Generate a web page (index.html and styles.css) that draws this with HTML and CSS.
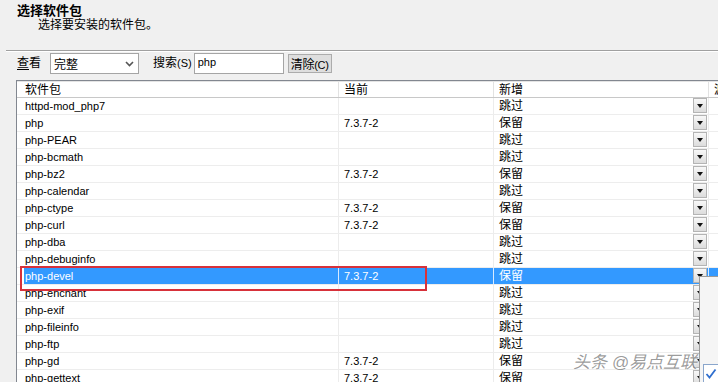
FILE: index.html
```html
<!DOCTYPE html>
<html>
<head>
  <meta charset="utf-8">
  <link rel="stylesheet" href="styles.css">
</head>
<body>
  <div class="head">
    <div class="title">选择软件包</div>
    <div class="sub">选择要安装的软件包。</div>
  </div>
  <div class="rule"></div>
  <div class="toolbar">
    <span class="lbl"><u>查</u>看</span>
    <div class="select">
      <span>完整</span>
      <svg width="9" height="6" viewBox="0 0 9 6"><path d="M1 1 L4.5 4.5 L8 1" fill="none" stroke="#555" stroke-width="1.6"/></svg>
    </div>
    <span class="lbl search">搜索<span class="lat">(S)</span></span>
    <div class="input">php</div>
    <button class="btn">清除<span class="lat">(C)</span></button>
  </div>

  <div class="list">
    <div class="row hdr">
      <div class="c">软件包</div>
      <div class="c">当前</div>
      <div class="c">新增</div>
      <div class="c">源码</div>
    </div>
    <div class="row"><div class="c">httpd-mod_php7</div><div class="c"></div><div class="c act"><span>跳过</span><i class="dd"></i></div><div class="c"></div></div>
    <div class="row"><div class="c">php</div><div class="c">7.3.7-2</div><div class="c act"><span>保留</span><i class="dd"></i></div><div class="c"></div></div>
    <div class="row"><div class="c">php-PEAR</div><div class="c"></div><div class="c act"><span>跳过</span><i class="dd"></i></div><div class="c"></div></div>
    <div class="row"><div class="c">php-bcmath</div><div class="c"></div><div class="c act"><span>跳过</span><i class="dd"></i></div><div class="c"></div></div>
    <div class="row"><div class="c">php-bz2</div><div class="c">7.3.7-2</div><div class="c act"><span>保留</span><i class="dd"></i></div><div class="c"></div></div>
    <div class="row"><div class="c">php-calendar</div><div class="c"></div><div class="c act"><span>跳过</span><i class="dd"></i></div><div class="c"></div></div>
    <div class="row"><div class="c">php-ctype</div><div class="c">7.3.7-2</div><div class="c act"><span>保留</span><i class="dd"></i></div><div class="c"></div></div>
    <div class="row"><div class="c">php-curl</div><div class="c">7.3.7-2</div><div class="c act"><span>保留</span><i class="dd"></i></div><div class="c"></div></div>
    <div class="row"><div class="c">php-dba</div><div class="c"></div><div class="c act"><span>跳过</span><i class="dd"></i></div><div class="c"></div></div>
    <div class="row"><div class="c">php-debuginfo</div><div class="c"></div><div class="c act"><span>跳过</span><i class="dd"></i></div><div class="c"></div></div>
    <div class="row sel"><div class="c">php-devel</div><div class="c">7.3.7-2</div><div class="c act"><span>保留</span><i class="dd"></i></div><div class="c"></div></div>
    <div class="row"><div class="c">php-enchant</div><div class="c"></div><div class="c act"><span>跳过</span><i class="dd"></i></div><div class="c"></div></div>
    <div class="row"><div class="c">php-exif</div><div class="c"></div><div class="c act"><span>跳过</span><i class="dd"></i></div><div class="c"></div></div>
    <div class="row"><div class="c">php-fileinfo</div><div class="c"></div><div class="c act"><span>跳过</span><i class="dd"></i></div><div class="c"></div></div>
    <div class="row"><div class="c">php-ftp</div><div class="c"></div><div class="c act"><span>跳过</span><i class="dd"></i></div><div class="c"></div></div>
    <div class="row"><div class="c">php-gd</div><div class="c">7.3.7-2</div><div class="c act"><span>保留</span><i class="dd"></i></div><div class="c"></div></div>
    <div class="row"><div class="c">php-gettext</div><div class="c">7.3.7-2</div><div class="c act"><span>保留</span><i class="dd"></i></div><div class="c"></div></div>

    <div class="mark"></div>
    <div class="popup">
      <div class="check">
        <svg width="12" height="12" viewBox="0 0 12 12"><path d="M1.5 6 L4.5 9.5 L10.5 1.5" fill="none" stroke="#2f6fcf" stroke-width="1.8"/></svg>
      </div>
    </div>
  </div>

  <div class="wm">头条 @易点互联</div>
</body>
</html>
```

FILE: styles.css
```css
body {
  margin: 0;
  width: 718px;
  height: 382px;
  overflow: hidden;
  position: relative;
  background: #f0f0f0;
  color: #000;
  font-family: "Liberation Sans", "Noto Sans CJK SC", sans-serif;
  font-size: 12px;
}
.head {
  height: 50px;
  box-sizing: border-box;
  padding-top: 3px;
}
.title {
  padding-left: 17px;
  font-weight: bold;
  font-size: 13px;
  line-height: 15px;
}
.sub {
  padding-left: 38px;
  line-height: 14px;
}
.rule {
  margin-left: 6px;
  height: 1px;
  background: #a0a0a0;
  border-bottom: 1px solid #fff;
}
.toolbar {
  display: flex;
  align-items: center;
  height: 21px;
  margin-top: 1px;
  padding-left: 17px;
}
.lbl {
  line-height: 21px;
}
.lbl u {
  text-underline-offset: 2px;
}
.lat {
  font-size: 11px;
}
.select {
  margin-left: 9px;
  width: 89px;
  height: 21px;
  box-sizing: border-box;
  border: 1px solid #a5a5a5;
  background: #fff;
  display: flex;
  align-items: center;
  justify-content: space-between;
  padding: 0 4px 0 3px;
}
.search {
  margin-left: 14px;
}
.input {
  margin-left: 2px;
  width: 90px;
  height: 21px;
  box-sizing: border-box;
  border: 1px solid #a5a5a5;
  background: #fff;
  padding: 1px 3px;
  font-size: 11px;
  line-height: 15px;
}
.btn {
  margin-left: 4px;
  width: 44px;
  height: 19px;
  padding: 0;
  border: 1px solid #acacac;
  background: #dedede;
  font-family: inherit;
  font-size: 12px;
  letter-spacing: -0.3px;
  color: #000;
  white-space: nowrap;
}
.list {
  position: relative;
  margin: 6px 0 0 16px;
  width: 740px;
  border-top: 1px solid #828790;
  border-left: 1px solid #828790;
  background: #fff;
}
.row {
  display: grid;
  grid-template-columns: 321px 155px 215px 1fr;
  height: 17px;
  box-sizing: border-box;
  border-bottom: 1px solid #ededed;
  font-size: 11px;
  line-height: 16px;
}
.row .c {
  padding-left: 5px;
  white-space: nowrap;
  overflow: hidden;
}
.row .c:first-child {
  padding-left: 8px;
}
.row .c + .c {
  border-left: 1px solid #ececec;
}
.row .act {
  display: flex;
  justify-content: space-between;
  align-items: flex-start;
  font-size: 12px;
  padding-right: 1px;
}
.hdr {
  border-bottom: 1px solid #c8c8c8;
  font-size: 12px;
  border-top: 1px solid #e4e4e4;
}
.hdr .c + .c {
  border-left-color: #e2e2e2;
}
.dd {
  width: 14px;
  height: 15px;
  box-sizing: border-box;
  border: 1px solid #b4b4b4;
  background: linear-gradient(#f8f8f8, #dcdcdc);
  display: flex;
  align-items: center;
  justify-content: center;
}
.dd::after {
  content: "";
  border-left: 3px solid transparent;
  border-right: 3px solid transparent;
  border-top: 4px solid #111;
}
.sel {
  background: #3399ff;
  color: #fff;
  box-shadow: inset 7px 0 #fff;
}
.sel .c + .c {
  border-left-color: #d8eaff;
}
.mark {
  position: absolute;
  left: 3px;
  top: 185px;
  width: 407px;
  height: 25px;
  box-sizing: border-box;
  border: 2px solid #d7313a;
}
.popup {
  position: absolute;
  left: 682px;
  top: 195px;
  width: 40px;
  height: 120px;
  background: #f5f5f5;
  border-left: 1px solid #9a9a9a;
  border-top: 1px solid #9a9a9a;
}
.check {
  position: absolute;
  left: 3px;
  top: 87px;
  width: 16px;
  height: 20px;
  box-sizing: border-box;
  border: 1px solid #8aa6cc;
  background: #fff;
  display: flex;
  align-items: center;
  justify-content: center;
}
.wm {
  position: absolute;
  left: 573px;
  top: 348px;
  font-size: 17px;
  font-style: italic;
  color: rgba(70, 70, 70, 0.55);
  text-shadow: 0 0 2px #fff;
  white-space: nowrap;
}
```
